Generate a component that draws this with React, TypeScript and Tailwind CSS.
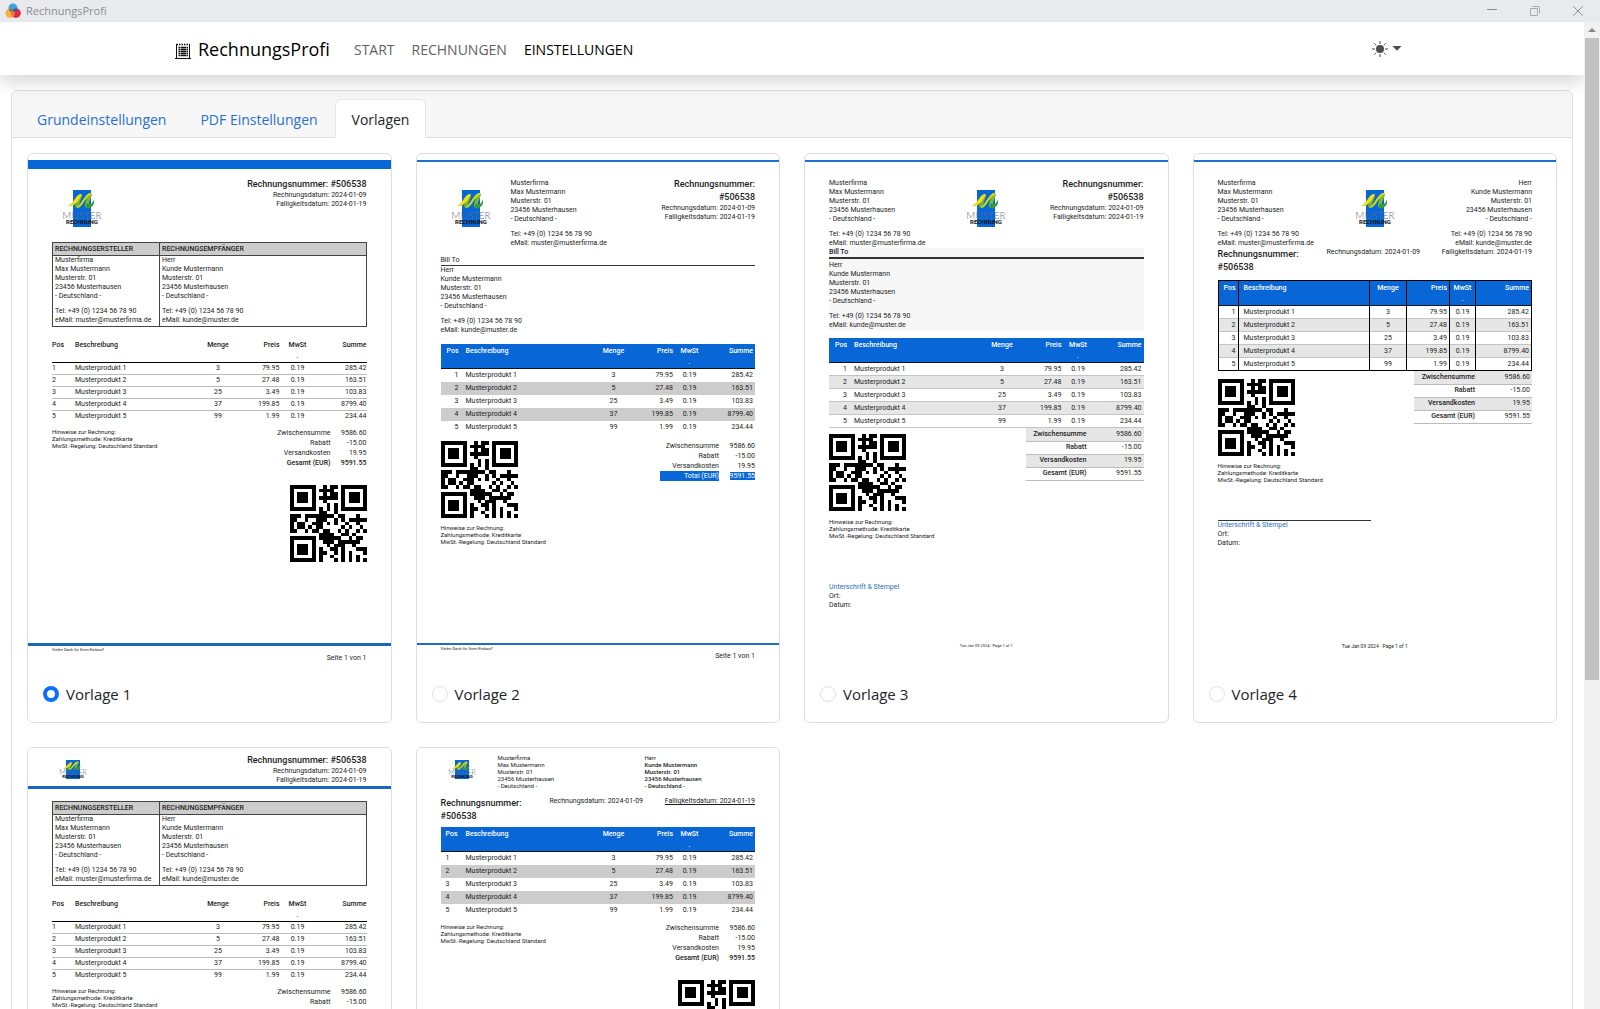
import { useState } from 'react'
import clsx from 'clsx'

const SENDER = [
  'Musterfirma',
  'Max Mustermann',
  'Musterstr. 01',
  '23456 Musterhausen',
  '- Deutschland -',
  '',
  'Tel: +49 (0) 1234 56 78 90',
  'eMail: muster@musterfirma.de',
]

const CUSTOMER = [
  'Herr',
  'Kunde Mustermann',
  'Musterstr. 01',
  '23456 Musterhausen',
  '- Deutschland -',
  '',
  'Tel: +49 (0) 1234 56 78 90',
  'eMail: kunde@muster.de',
]

const ITEMS = [
  { name: 'Musterprodukt 1', amount: '3', price: '79.95', tax: '0.19', sum: '285.42' },
  { name: 'Musterprodukt 2', amount: '5', price: '27.48', tax: '0.19', sum: '163.51' },
  { name: 'Musterprodukt 3', amount: '25', price: '3.49', tax: '0.19', sum: '103.83' },
  { name: 'Musterprodukt 4', amount: '37', price: '199.85', tax: '0.19', sum: '8799.40' },
  { name: 'Musterprodukt 5', amount: '99', price: '1.99', tax: '0.19', sum: '234.44' },
]

const QR = [
  '111111100101101111111',
  '100000101111001000001',
  '101110100101101011101',
  '101110101111101011101',
  '101110100100001011101',
  '100000100010101000001',
  '111111101010101111111',
  '000000001100100000000',
  '111011111111011000100',
  '110010011100101011111',
  '101100111010100100100',
  '101101011000001010010',
  '110010110110010100101',
  '000000001111001101000',
  '111111101111110010110',
  '100000100111011111100',
  '101110100010111001000',
  '101110101001101000111',
  '101110101100101010001',
  '100000101001001010100',
  '111111101000101010101',
]

const QrCode = () => (
  <svg viewBox="0 0 21 21" shapeRendering="crispEdges" className="size-[77px] shrink-0">
    {QR.map((row, y) =>
      row.split('').map((cell, x) =>
        cell === '1' ? <rect key={`${x}-${y}`} x={x} y={y} width="1" height="1" /> : null
      )
    )}
  </svg>
)

const Swoosh = () => (
  <>
    <path d="M0 16C5 15 8 4 13 4C16 4 11 12 11 16C14 12 19 2 23 3C26 4 20 12 21 14C23 16 25 12 26 10C27 14 23 19 19 18C15 17 18 12 19 8C16 11 13 18 9 18C5 17 9 11 10 8C7 11 5 17 0 16Z" fill="#7db928" />
    <path d="M0 16C5 15 8 4 13 4C15 4 12 8 10 11C7 14 5 17 0 16Z" fill="#f4e011" />
    <path d="M12 14C15 10 19 2 23 3C24 5 20 6 18 9C15 12 13 18 9 18Z" fill="#d3d81c" />
    <path d="M20 13C22 17 25 12 26 10C27 14 23 19 19 18C17 17 18 14 20 13Z" fill="#2f9a3f" />
  </>
)

const Logo = () => (
  <svg viewBox="0 0 44 38" className="h-[38px] w-[44px] shrink-0">
    <rect x="13" y="0" width="18" height="37" fill="#0866d6" />
    <g transform="translate(8 0)">
      <Swoosh />
    </g>
    <text x="22" y="29" textAnchor="middle" fontSize="10" fill="#6a707b" className="font-['Lato'] font-light">MUSTER</text>
    <text x="22" y="34" textAnchor="middle" fontSize="6" fill="#111" className="font-['Roboto'] font-bold">RECHNUNG</text>
  </svg>
)

const SmallLogo = () => (
  <svg viewBox="0 0 30 19" className="h-[19px] w-[30px] shrink-0">
    <rect x="8" y="0" width="14" height="19" fill="#0866d6" />
    <g transform="translate(5 0) scale(.66 .55)">
      <Swoosh />
    </g>
    <text x="15" y="15" textAnchor="middle" fontSize="7" fill="#6a707b" className="font-['Lato'] font-light">MUSTER</text>
    <text x="15" y="18" textAnchor="middle" fontSize="4" fill="#111" className="font-['Roboto'] font-bold">RECHNUNG</text>
  </svg>
)

interface LinesProps {
  lines: string[]
  className?: string
}

const Lines: React.FC<LinesProps> = ({ lines, className }) => (
  <div className={clsx('text-[7px] leading-[9px] whitespace-nowrap', className)}>
    {lines.map((line, i) => (line ? <p key={i}>{line}</p> : <div key={i} className="h-1.5" />))}
  </div>
)

interface HeadlineProps {
  twoLines?: boolean
}

const Headline: React.FC<HeadlineProps> = ({ twoLines }) => (
  <div className="text-right text-[7px] leading-[9px]">
    <p className="text-[9px] leading-[13px] font-medium">
      Rechnungsnummer: {twoLines && <br />}#506538
    </p>
    <p>Rechnungsdatum: 2024-01-09</p>
    <p>Falligkeitsdatum: 2024-01-19</p>
  </div>
)

const HeadlineRow: React.FC<{ underlined?: boolean }> = ({ underlined }) => (
  <div className="flex text-[7px] leading-[9px]">
    <p className="w-[109px] text-[9px] leading-[13px] font-medium">
      Rechnungsnummer:
      <br />
      #506538
    </p>
    <p>Rechnungsdatum: 2024-01-09</p>
    <p className={clsx('ml-auto', underlined && 'underline')}>Falligkeitsdatum: 2024-01-19</p>
  </div>
)

type TableStyle = 'plain' | 'striped' | 'lined' | 'grid' | 'stripedLeft'

const ItemTable: React.FC<{ kind: TableStyle }> = ({ kind }) => {
  const plain = kind === 'plain'
  const grid = kind === 'grid'
  const cell = grid ? 'border-x border-black' : ''
  const posAlign = plain ? 'text-left' : kind === 'stripedLeft' ? 'pl-[5px] text-left' : 'pr-[2px] text-right'
  const rightPad = plain ? '' : 'pr-[2px]'

  const rowStyle = (i: number) => {
    const even = i % 2 === 1
    if (plain) return i < ITEMS.length - 1 ? 'h-[12px] border-b border-[#bbb]' : 'h-[11px]'
    if (kind === 'lined' || grid) return clsx('h-[13px] border-b', even && 'bg-[#e6e6e6]', grid && i === 4 ? 'border-black' : 'border-[#c4c4c4]')
    return clsx('h-[13px]', even && 'bg-[#ccc]')
  }

  return (
    <table className={clsx('w-full table-fixed border-collapse text-[7px] leading-[11px]', grid && 'border border-black')}>
      <colgroup>
        <col className={plain ? 'w-[23px]' : 'w-[20px]'} />
        <col />
        <col className="w-[37px]" />
        <col className="w-[43px]" />
        <col className={plain ? 'w-[36px]' : grid ? 'w-[26px]' : 'w-[29px]'} />
        <col className={grid ? 'w-[56px]' : 'w-[51px]'} />
      </colgroup>
      <thead>
        <tr className={clsx('border-b align-top', plain ? 'border-black' : 'border-[#10151c] bg-[#0866d6] text-white')}>
          <th className={clsx('font-medium', posAlign, cell, !plain && 'pt-0.5')}>Pos</th>
          <th className={clsx('text-left font-medium', cell, !plain && 'pt-0.5 pl-[5px]')}>Beschreibung</th>
          <th className={clsx('font-medium', cell, !plain && 'pt-0.5')}>Menge</th>
          <th className={clsx('text-right font-medium', cell, rightPad, !plain && 'pt-0.5')}>Preis</th>
          <th className={clsx('font-medium', cell, !plain && 'pt-0.5')}>
            MwSt
            <br />.
          </th>
          <th className={clsx('text-right font-medium', cell, rightPad, !plain && 'pt-0.5')}>Summe</th>
        </tr>
      </thead>
      <tbody>
        {ITEMS.map((item, i) => (
          <tr key={item.name} className={rowStyle(i)}>
            <td className={clsx(posAlign, cell)}>{i + 1}</td>
            <td className={clsx(cell, !plain && 'pl-[5px]')}>{item.name}</td>
            <td className={clsx('text-center', cell)}>{item.amount}</td>
            <td className={clsx('text-right', cell, rightPad)}>{item.price}</td>
            <td className={clsx('text-center', cell)}>{item.tax}</td>
            <td className={clsx('text-right', cell, rightPad)}>{item.sum}</td>
          </tr>
        ))}
      </tbody>
    </table>
  )
}

const Notes = () => (
  <div className="text-[6px] leading-[7px]">
    <p>Hinweise zur Rechnung:</p>
    <p>Zahlungsmethode: Kreditkarte</p>
    <p>MwSt.-Regelung: Deutschland Standard</p>
  </div>
)

const Totals: React.FC<{ highlight?: boolean }> = ({ highlight }) => (
  <table className="w-[95px] text-right text-[7px] leading-[10px]">
    <tbody>
      <tr>
        <td>Zwischensumme</td>
        <td className="w-[36px]">9586.60</td>
      </tr>
      <tr>
        <td>Rabatt</td>
        <td>-15.00</td>
      </tr>
      <tr>
        <td>Versandkosten</td>
        <td>19.95</td>
      </tr>
      {highlight ? (
        <tr className="text-white">
          <td className="bg-[#0866d6]">Total (EUR)</td>
          <td>
            <span className="bg-[#0866d6]">9591.55</span>
          </td>
        </tr>
      ) : (
        <tr className="font-medium">
          <td>Gesamt (EUR)</td>
          <td>9591.55</td>
        </tr>
      )}
    </tbody>
  </table>
)

const LinedTotals = () => (
  <table className="w-[118px] border-collapse text-right text-[7px] leading-[11px]">
    <tbody>
      {[
        ['Zwischensumme', '9586.60'],
        ['Rabatt', '-15.00'],
        ['Versandkosten', '19.95'],
        ['Gesamt (EUR)', '9591.55'],
      ].map(([label, value], i) => (
        <tr key={label} className={clsx('h-[13px] border-b border-[#bbb]', i % 2 === 0 && 'bg-[#e6e6e6]')}>
          <th className="font-medium">{label}</th>
          <td className="w-[57px] pr-[2px]">{value}</td>
        </tr>
      ))}
    </tbody>
  </table>
)

const Signature = () => (
  <>
    <p className="text-[#1f6fc0]">Unterschrift & Stempel</p>
    <p>Ort:</p>
    <p>Datum:</p>
  </>
)

const TopLine = () => <div className="mt-1.5 h-0.5 bg-[#1f72cc]" />

// Shared body of templates 1 and 5
const BoxedBody = () => (
  <div className="flex flex-col px-6">
    <table className="w-full border-collapse border border-[#444] text-left text-[7px]">
      <thead>
        <tr className="border-b border-[#444] bg-[#ccc] leading-[12px]">
          <th className="w-[107px] border-r border-[#444] pl-[2px] font-medium">RECHNUNGSERSTELLER</th>
          <th className="pl-[2px] font-medium">RECHNUNGSEMPFÄNGER</th>
        </tr>
      </thead>
      <tbody>
        <tr>
          <td className="border-r border-[#444] pb-px pl-[2px]">
            <Lines lines={SENDER} />
          </td>
          <td className="pb-px pl-[2px]">
            <Lines lines={CUSTOMER} />
          </td>
        </tr>
      </tbody>
    </table>
    <div className="mt-[13px]">
      <ItemTable kind="plain" />
    </div>
    <div className="mt-1.5 flex items-start justify-between">
      <Notes />
      <Totals />
    </div>
    <div className="mt-[17px] flex justify-end">
      <QrCode />
    </div>
  </div>
)

const Template1 = () => (
  <>
    <div className="mt-1.5 h-[9px] bg-[#0866d6]" />
    <div className="mb-3.5 flex items-start justify-between px-6 pt-[9px]">
      <div className="mt-3 ml-2">
        <Logo />
      </div>
      <Headline />
    </div>
    <BoxedBody />
    <div className="mt-auto h-[3px] bg-[#1a66b8]" />
    <div className="px-6 pt-0.5 pb-1">
      <p className="text-[4px] leading-[4px]">Vielen Dank für Ihren Einkauf!</p>
      <p className="mt-0.5 text-right text-[7px] leading-[8px]">Seite 1 von 1</p>
    </div>
  </>
)

const Template2 = () => (
  <>
    <TopLine />
    <div className="flex flex-col px-6 pt-4">
      <div className="flex items-start">
        <div className="mt-3 ml-2">
          <Logo />
        </div>
        <Lines lines={SENDER} className="mt-px ml-[18px]" />
        <div className="ml-auto">
          <Headline twoLines />
        </div>
      </div>
      <p className="mt-2 border-b border-[#333] text-[7px] leading-[9px]">Bill To</p>
      <Lines lines={CUSTOMER} />
      <div className="mt-[9px]">
        <ItemTable kind="striped" />
      </div>
      <div className="mt-[7px] flex items-start justify-between">
        <QrCode />
        <Totals highlight />
      </div>
      <div className="mt-1.5">
        <Notes />
      </div>
    </div>
    <div className="mt-auto h-0.5 bg-[#1f6cc4]" />
    <div className="px-6 pt-0.5 pb-[5px]">
      <p className="text-[4px] leading-[4px]">Vielen Dank für Ihren Einkauf!</p>
      <p className="mt-px text-right text-[7px] leading-[9px]">Seite 1 von 1</p>
    </div>
  </>
)

const Template3 = () => (
  <>
    <TopLine />
    <div className="flex flex-col px-6 pt-4">
      <div className="grid grid-cols-[1fr_auto_1fr] items-start">
        <Lines lines={SENDER} className="mt-px" />
        <div className="mt-3">
          <Logo />
        </div>
        <Headline twoLines />
      </div>
      <div className="bg-[#f7f7f7] text-[7px]">
        <p className="border-b-2 border-[#333] leading-[9px] font-medium">Bill To</p>
        <Lines lines={CUSTOMER} className="pt-0.5" />
      </div>
      <div className="mt-[8px]">
        <ItemTable kind="lined" />
      </div>
      <div className="flex items-start justify-between">
        <div className="mt-1.5">
          <QrCode />
        </div>
        <LinedTotals />
      </div>
      <div className="mt-[7px]">
        <Notes />
      </div>
      <div className="mt-11 text-[7px] leading-[9px]">
        <Signature />
      </div>
    </div>
    <p className="mt-auto pb-[18px] text-center text-[4px] leading-[4px]">Tue Jan 09 2024 · Page 1 of 1</p>
  </>
)

const Template4 = () => (
  <>
    <TopLine />
    <div className="flex flex-col px-6 pt-4">
      <div className="grid grid-cols-[1fr_auto_1fr] items-start">
        <Lines lines={SENDER} className="mt-px" />
        <div className="mt-3">
          <Logo />
        </div>
        <Lines lines={CUSTOMER} className="mt-px text-right" />
      </div>
      <HeadlineRow />
      <div className="mt-1.5">
        <ItemTable kind="grid" />
      </div>
      <div className="flex items-start justify-between">
        <div className="mt-[8px]">
          <QrCode />
        </div>
        <LinedTotals />
      </div>
      <div className="mt-1.5">
        <Notes />
      </div>
      <div className="mt-[37px] w-[153px] border-t border-[#333] text-[7px] leading-[9px]">
        <Signature />
      </div>
    </div>
    <p className="mt-auto pb-[17px] text-center text-[5px] leading-[5px]">Tue Jan 09 2024 · Page 1 of 1</p>
  </>
)

const Template5 = () => (
  <>
    <div className="flex items-start justify-between px-6 pt-1.5">
      <div className="mt-1.5 ml-1.5">
        <SmallLogo />
      </div>
      <Headline />
    </div>
    <div className="mt-px mb-3 h-[3px] bg-[#1a66c8]" />
    <BoxedBody />
  </>
)

const Template6 = () => (
  <div className="flex flex-col px-6 pt-[6px]">
    <div className="mb-2 flex items-start text-[6px] leading-[7px]">
      <div className="mt-1.5 ml-1.5">
        <SmallLogo />
      </div>
      <div className="ml-[21px] w-[147px]">
        {SENDER.slice(0, 5).map((line) => (
          <p key={line}>{line}</p>
        ))}
      </div>
      <div>
        {CUSTOMER.slice(0, 5).map((line, i) => (
          <p key={line} className={i > 0 ? 'font-medium' : ''}>
            {line}
          </p>
        ))}
      </div>
    </div>
    <HeadlineRow underlined />
    <div className="mt-1">
      <ItemTable kind="stripedLeft" />
    </div>
    <div className="mt-1.5 flex items-start justify-between">
      <Notes />
      <Totals />
    </div>
    <div className="mt-[17px] flex justify-end">
      <QrCode />
    </div>
  </div>
)

const TEMPLATES = [Template1, Template2, Template3, Template4, Template5, Template6]

const TitleBar = () => (
  <header className="flex h-[22px] shrink-0 items-center bg-[#e8eaee] text-[#8b8d92]">
    <svg viewBox="0 0 16 16" className="ml-[5px] size-4">
      <circle cx="8" cy="5" r="4.5" fill="#3aa3dc" />
      <circle cx="5.2" cy="10.2" r="4.8" fill="#f8b13c" />
      <circle cx="11" cy="10.2" r="4.8" fill="#dc2f45" />
      <path d="M8 6.4a4.8 4.8 0 0 0-1.8 3.8c0 1.5.7 2.9 1.8 3.8a4.8 4.8 0 0 0 1.8-3.8A4.8 4.8 0 0 0 8 6.4z" fill="#f07a3e" />
      <path d="M3.6 5.7a4.8 4.8 0 0 1 4.4.7 4.5 4.5 0 0 1-1.3 2.9 4.5 4.5 0 0 1-3.1-3.6z" fill="#5c7f86" />
      <path d="M12.4 5.7a4.8 4.8 0 0 0-4.4.7 4.5 4.5 0 0 0 1.3 2.9 4.5 4.5 0 0 0 3.1-3.6z" fill="#4f4f90" />
    </svg>
    <span className="ml-[5px] text-[11px]">RechnungsProfi</span>
    <div className="ml-auto flex items-center">
      <button aria-label="Minimieren" className="flex h-[22px] w-[43px] items-center justify-center">
        <svg viewBox="0 0 10 10" className="size-2.5"><path d="M0 3.5h10" stroke="currentColor" /></svg>
      </button>
      <button aria-label="Verkleinern" className="flex h-[22px] w-[43px] items-center justify-center">
        <svg viewBox="0 0 10 10" fill="none" stroke="#a9abb0" className="size-2.5">
          <path d="M.5 2.5h7v7h-7zM2.5.5h6.5l.5.5v6.5" />
        </svg>
      </button>
      <button aria-label="Schließen" className="flex h-[22px] w-[44px] items-center justify-center">
        <svg viewBox="0 0 10 10" className="size-2.5"><path d="M.3.3l9.4 9.4M9.7.3L.3 9.7" stroke="currentColor" /></svg>
      </button>
    </div>
  </header>
)

const Navbar = () => (
  <nav className="relative z-10 h-[53px] shrink-0 bg-white shadow-[0_8px_16px_rgba(0,0,0,0.15)]">
    <div className="mx-auto flex h-full max-w-[1234px] items-center pt-0.5">
      <a href="#" className="flex items-center text-[18px] text-black">
        <svg viewBox="0 0 16 16" className="mt-0.5 mr-[7px] size-4" fill="none" stroke="#111">
          <path d="M1.5 1v14M14.5 1v14M0 15.5h16" />
          <path d="M1.5 1.5h13" strokeDasharray="1.5 1" strokeWidth="1.5" />
          <path d="M3.5 4.5h1.500M3.5 6.5h1.500M3.5 8.5h1.500M3.5 10.5h1.500M3.5 12.5h1.500M5.5 4.5h5.500M5.5 6.5h5.500M5.5 8.5h5.500M5.5 10.5h5.500M5.5 12.5h5.500M11.5 4.5h1.500M11.5 6.5h1.500M11.5 8.5h1.500M11.5 10.5h1.500M11.5 12.5h1.500" strokeWidth="1.3" />
        </svg>
        RechnungsProfi
      </a>
      <div className="ml-6 flex gap-[17px] text-[14px] text-[#5f6164]">
        <a href="#">START</a>
        <a href="#">RECHNUNGEN</a>
        <a href="#" className="text-black">EINSTELLUNGEN</a>
      </div>
      <button aria-label="Farbschema" className="mr-[7px] mb-0.5 ml-auto flex items-center gap-1 text-[#4d4d4d]">
        <svg viewBox="0 0 16 16" className="size-4" fill="currentColor">
          <circle cx="8" cy="8" r="4" />
          <path d="M8 0v3M8 13v3M0 8h3M13 8h3M2.3 2.3l2 2M11.7 11.7l2 2M13.7 2.3l-2 2M4.3 11.7l-2 2" stroke="currentColor" />
        </svg>
        <svg viewBox="0 0 10 5" className="h-[5px] w-2.5" fill="currentColor"><path d="M.5 0h9L5 4.800z" /></svg>
      </button>
    </div>
  </nav>
)

const TABS = ['Grundeinstellungen', 'PDF Einstellungen', 'Vorlagen']

export default function App() {
  const [tab, setTab] = useState('Vorlagen')
  const [selected, setSelected] = useState(0)

  return (
    <div className="flex h-screen flex-col overflow-hidden bg-white font-['Open_Sans','Noto_Sans',sans-serif] text-[#212529]">
      <TitleBar />
      <div className="flex min-h-0 grow">
        <div className="flex min-w-0 grow flex-col overflow-hidden">
          <Navbar />
          <main className="mx-[11px] mt-[15px] shrink-0 rounded-md border border-[#dedede]">
            <div role="tablist" className="flex h-[47px] items-end rounded-t-md border-b border-[#dedede] bg-[#f7f7f7] px-2">
              {TABS.map((name) => (
                <button
                  key={name}
                  role="tab"
                  aria-selected={tab === name}
                  onClick={() => setTab(name)}
                  className={clsx(
                    '-mb-px h-[39px] rounded-t-md border px-4 pt-0.5 text-[14px]',
                    tab === name ? 'border-[#e6e6e6] border-b-white bg-white text-[#212529]' : 'border-transparent text-[#2470d8]'
                  )}
                >
                  {name}
                </button>
              ))}
            </div>
            <div className="grid grid-cols-4 gap-6 p-[15px]">
              {TEMPLATES.map((Template, i) => (
                <div key={i} className="rounded-md border border-[#dedede]">
                  <div className="flex aspect-[363/513] flex-col font-['Roboto',sans-serif] text-[#1c1c1c]">
                    <Template />
                  </div>
                  <label className="flex items-center gap-[7px] px-[15px] py-4 text-[15px] leading-6">
                    <input
                      type="radio"
                      name="template"
                      checked={selected === i}
                      onChange={() => setSelected(i)}
                      className="size-4 appearance-none rounded-full border border-[#dee2e6] checked:border-4 checked:border-[#0d6efd]"
                    />
                    Vorlage {i + 1}
                  </label>
                </div>
              ))}
            </div>
          </main>
        </div>
        <div className="flex w-4 shrink-0 flex-col items-center bg-[#f1f1f1]">
          <div className="flex h-4 items-center">
            <svg viewBox="0 0 8 4" className="h-1 w-2"><path d="M0 4L4 0l4 4z" fill="#8a8a8a" /></svg>
          </div>
          <div className="h-[65%] w-3.5 bg-[#c1c1c1]" />
        </div>
      </div>
    </div>
  )
}
